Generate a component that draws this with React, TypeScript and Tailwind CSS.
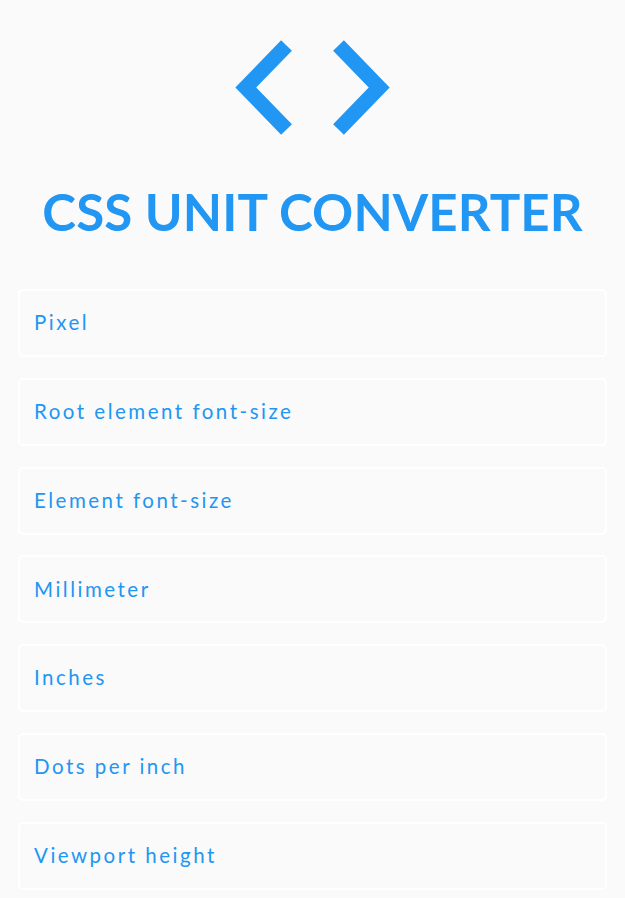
import React from "react";

const units = [
  "Pixel",
  "Root element font-size",
  "Element font-size",
  "Millimeter",
  "Inches",
  "Dots per inch",
  "Viewport height",
];

export default function App() {
  return (
    <div className="min-h-[898px] w-full bg-[#fafafa] overflow-hidden" style={{ fontFamily: "Lato, 'Open Sans', sans-serif" }}>
      <div className="flex flex-col items-center pt-[41px]">
        <svg width="155" height="93" viewBox="0 0 155 93" overflow="visible" className="block">
          <polyline points="51.5,4.5 10.8,46.5 51.5,88.5" fill="none" stroke="#2196f3" strokeWidth="15" strokeLinejoin="miter" />
          <polyline points="103.5,4.5 144.2,46.5 103.5,88.5" fill="none" stroke="#2196f3" strokeWidth="15" strokeLinejoin="miter" />
        </svg>
        <h1 className="mt-[48px] text-[51px] leading-[60px] font-bold text-[#2196f3] tracking-[0.1px]">
          CSS UNIT CONVERTER
        </h1>
      </div>
      <div className="mt-[47px] px-[18px] flex flex-col gap-[20.8px]">
        {units.map((u) => (
          <div key={u} className="h-[68px] rounded-[5px] border-2 border-white bg-[#fafafa] flex items-center pl-[14px] pb-[1px]">
            <span className="text-[20.5px] tracking-[2.5px] text-[#2196f3]">{u}</span>
          </div>
        ))}
      </div>
    </div>
  );
}
